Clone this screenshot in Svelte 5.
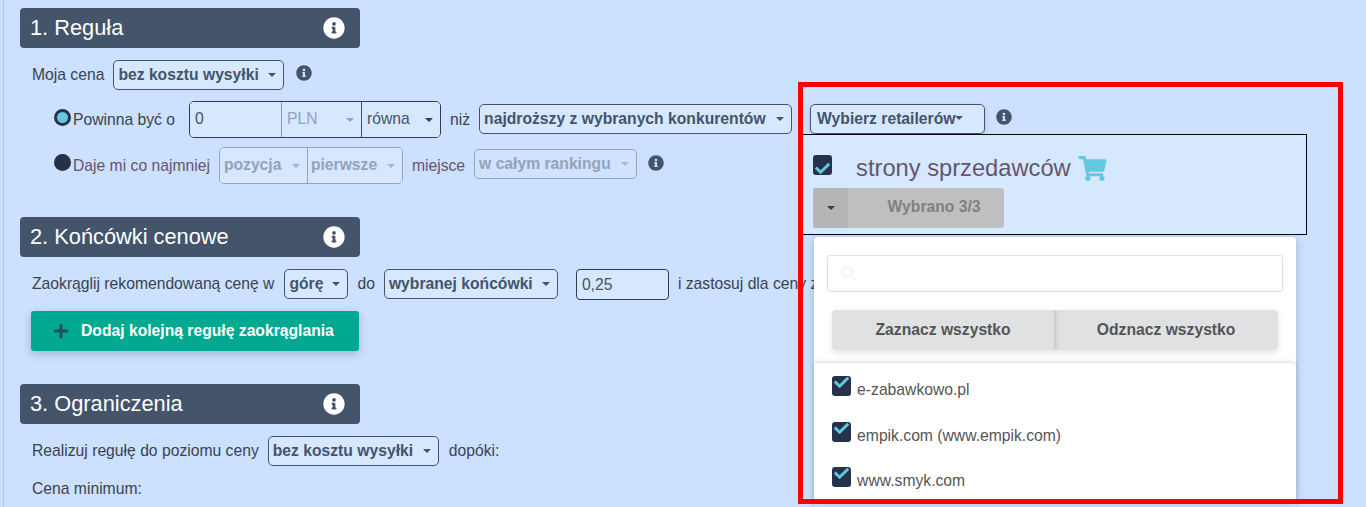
<script lang="ts">
const retailers = ["e-zabawkowo.pl", "empik.com (www.empik.com)", "www.smyk.com"];
const infoPath =
	"M256 8C119.043 8 8 119.083 8 256c0 136.997 111.043 248 248 248s248-111.003 248-248C504 119.083 392.957 8 256 8zm0 110c23.196 0 42 18.804 42 42s-18.804 42-42 42-42-18.804-42-42 18.804-42 42-42zm56 254c0 6.627-5.373 12-12 12h-88c-6.627 0-12-5.373-12-12v-24c0-6.627 5.373-12 12-12h12v-64h-12c-6.627 0-12-5.373-12-12v-24c0-6.627 5.373-12 12-12h64c6.627 0 12 5.373 12 12v100h12c6.627 0 12 5.373 12 12v24z";
const checkPath =
	"M173.898 439.404l-166.4-166.4c-9.997-9.997-9.997-26.206 0-36.204l36.203-36.204c9.997-9.998 26.207-9.998 36.204 0L192 312.69 432.095 72.596c9.997-9.997 26.207-9.997 36.204 0l36.203 36.204c9.997 9.997 9.997 26.206 0 36.204l-294.4 294.401c-9.998 9.997-26.207 9.997-36.204-.001z";
</script>

{#snippet info(cls)}
	<svg class={cls} viewBox="0 0 512 512" aria-hidden="true"><path d={infoPath} /></svg>
{/snippet}

{#snippet checkbox(cls)}
	<span class="check {cls}">
		<svg viewBox="0 0 512 512" aria-hidden="true"><path d={checkPath} /></svg>
	</span>
{/snippet}

<div class="page">
	<section class="rule">
		<h2>1. Reguła {@render info("head-info")}</h2>
		<div class="row first">
			<span class="label">Moja cena</span>
			<div class="select w171">bez kosztu wysyłki<i class="caret"></i></div>
			{@render info("row-info")}
		</div>
		<div class="row option">
			<span class="radio on"></span>
			<span class="label">Powinna być o</span>
			<div class="group active">
				<div class="cell amount">0</div>
				<div class="cell currency">PLN<i class="caret"></i></div>
				<div class="cell relation">równa<i class="caret dark"></i></div>
			</div>
			<span class="label">niż</span>
			<div class="select w313">najdroższy z wybranych konkurentów<i class="caret"></i></div>
			<div class="picker">
				<div class="select retail">Wybierz retailerów<i class="caret tight"></i></div>
				<div class="panel">
					<div class="panel-title">
						{@render checkbox("low")}
						<span class="panel-name">strony sprzedawców</span>
						<svg class="cart" viewBox="0 0 576 512" aria-hidden="true"><path d="M528.12 301.319l47.273-208C578.806 78.301 567.391 64 551.99 64H159.208l-9.166-44.81C147.758 8.021 137.93 0 126.529 0H24C10.745 0 0 10.745 0 24v16c0 13.255 10.745 24 24 24h69.883l70.248 343.435C147.325 417.1 136 435.222 136 456c0 30.928 25.072 56 56 56s56-25.072 56-56c0-15.674-6.447-29.835-16.824-40h209.647C430.447 426.165 424 440.326 424 456c0 30.928 25.072 56 56 56s56-25.072 56-56c0-22.172-12.888-41.332-31.579-50.405l5.517-24.276c3.413-15.018-8.002-29.319-23.403-29.319H218.117l-6.545-32h293.145c11.206 0 20.92-7.754 23.403-18.681z" /></svg>
					</div>
					<div class="chosen">
						<span class="chosen-caret"><i class="caret dark"></i></span>
						<span class="chosen-text">Wybrano 3/3</span>
					</div>
				</div>
				<div class="dropdown">
					<div class="search">
						<svg viewBox="0 0 512 512" aria-hidden="true"><path d="M505 442.7L405.3 343c-4.5-4.5-10.6-7-17-7H372c27.6-35.3 44-79.7 44-128C416 93.1 322.9 0 208 0S0 93.1 0 208s93.1 208 208 208c48.3 0 92.7-16.4 128-44v16.3c0 6.4 2.5 12.5 7 17l99.7 99.7c9.4 9.4 24.6 9.4 33.9 0l28.3-28.3c9.4-9.4 9.4-24.6.1-34zM208 336c-70.7 0-128-57.2-128-128 0-70.7 57.2-128 128-128 70.7 0 128 57.2 128 128 0 70.7-57.2 128-128 128z" /></svg>
					</div>
					<div class="bulk">
						<button type="button" class="select-all">Zaznacz wszystko</button>
						<button type="button">Odznacz wszystko</button>
					</div>
					<ul>
						{#each retailers as retailer}
							<li>{@render checkbox("high")}<span class="retailer">{retailer}</span></li>
						{/each}
					</ul>
				</div>
			</div>
			{@render info("row-info")}
		</div>
		<div class="row option second">
			<span class="radio"></span>
			<span class="label muted">Daje mi co najmniej</span>
			<div class="group disabled">
				<div class="cell position">pozycja<i class="caret"></i></div>
				<div class="cell place">pierwsze<i class="caret"></i></div>
			</div>
			<span class="label muted">miejsce</span>
			<div class="select disabled w163">w całym rankingu<i class="caret"></i></div>
			{@render info("row-info")}
		</div>
	</section>

	<section class="rule rounding">
		<h2>2. Końcówki cenowe {@render info("head-info")}</h2>
		<div class="row first">
			<span class="label">Zaokrąglij rekomendowaną cenę w</span>
			<div class="select w64">górę<i class="caret"></i></div>
			<span class="label">do</span>
			<div class="select w174">wybranej końcówki<i class="caret"></i></div>
			<div class="ending">0,25</div>
			<span class="label nowrap">i zastosuj dla ceny z przedziału</span>
		</div>
		<button type="button" class="add">
			<svg viewBox="0 0 448 512" aria-hidden="true"><path d="M416 208H272V64c0-17.67-14.33-32-32-32h-32c-17.67 0-32 14.33-32 32v144H32c-17.67 0-32 14.33-32 32v32c0 17.67 14.33 32 32 32h144v144c0 17.67 14.33 32 32 32h32c17.67 0 32-14.33 32-32V304h144c17.67 0 32-14.33 32-32v-32c0-17.67-14.33-32-32-32z" /></svg>
			Dodaj kolejną regułę zaokrąglania
		</button>
	</section>

	<section class="rule limits">
		<h2>3. Ograniczenia {@render info("head-info")}</h2>
		<div class="row first">
			<span class="label">Realizuj regułę do poziomu ceny</span>
			<div class="select w171">bez kosztu wysyłki<i class="caret"></i></div>
			<span class="label until">dopóki:</span>
		</div>
		<div class="row minimum"><span class="label">Cena minimum:</span></div>
	</section>

	<div class="frame"></div>
</div>

<style>
	:global(body) {
		margin: 0;
		background: #cce0ff;
	}

	.page {
		position: relative;
		box-sizing: border-box;
		height: 507px;
		padding: 8px 0 0 20px;
		overflow: hidden;
		background: #cce0ff;
		color: #3c4858;
		font-family: "Liberation Sans", Arial, sans-serif;
		font-size: 15.7px;
	}

	.page::before {
		content: "";
		position: absolute;
		top: 0;
		bottom: 0;
		left: 3px;
		width: 1px;
		background: #b5c3dc;
	}

	h2 {
		display: flex;
		align-items: center;
		justify-content: space-between;
		box-sizing: border-box;
		width: 340px;
		height: 40px;
		margin: 0;
		padding: 0 15px 0 10px;
		border-radius: 4px;
		background: #44546a;
		color: #fff;
		font-size: 21.8px;
		font-weight: 400;
	}

	.head-info {
		width: 22px;
		height: 22px;
		fill: #fff;
	}

	.row-info {
		flex: none;
		width: 16px;
		height: 16px;
		margin-top: -5px;
		margin-left: 3px;
		fill: #44546a;
	}

	.row {
		display: flex;
		align-items: center;
		gap: 8px;
		margin-left: 12px;
	}

	.first {
		gap: 9px;
		height: 30px;
		margin-top: 12px;
	}

	.until {
		margin-left: 1px;
	}

	.option {
		height: 35px;
		margin-top: 12px;
		margin-left: 34px;
	}

	.option .select {
		margin-bottom: 1px;
	}

	.second {
		margin-top: 11px;
	}

	.second .select {
		margin-bottom: 3px;
		margin-left: 1px;
	}

	.label {
		color: #3a4350;
	}

	.muted {
		color: #65566e;
	}

	.nowrap {
		white-space: nowrap;
	}

	.radio {
		flex: none;
		box-sizing: border-box;
		width: 17px;
		height: 17px;
		margin-top: -4px;
		margin-right: -6px;
		border: 3px solid #25324a;
		border-radius: 50%;
		background: #25324a;
	}

	.second .radio {
		margin-top: -6px;
	}

	.radio.on {
		background: #62c9de;
	}

	.select {
		position: relative;
		flex: none;
		box-sizing: border-box;
		height: 30px;
		padding: 0 4px;
		border: 1px solid #44546a;
		border-radius: 5px;
		background: #d6e8ff;
		color: #44546a;
		font-weight: 700;
		line-height: 28px;
		white-space: nowrap;
	}

	.w171 {
		width: 171px;
	}

	.w313 {
		width: 313px;
		margin-left: 1px;
	}

	.w163 {
		width: 163px;
	}

	.w64 {
		width: 64px;
		margin-left: 1px;
	}

	.w174 {
		width: 174px;
	}

	.ending {
		flex: none;
		box-sizing: border-box;
		width: 93px;
		height: 31px;
		margin-left: 9px;
		padding: 0 5px;
		border: 1px solid #2f3d52;
		border-radius: 4px;
		background: #d6e8ff;
		color: #44546a;
		line-height: 29px;
	}

	.caret {
		position: absolute;
		top: 50%;
		right: 7px;
		width: 0;
		height: 0;
		margin-top: -2px;
		border-top: 4px solid #44546a;
		border-right: 4px solid transparent;
		border-left: 4px solid transparent;
	}

	.caret.dark {
		border-top-color: #2f3d52;
	}

	.caret.tight {
		position: static;
		display: inline-block;
		margin: 0 0 3px 0;
		vertical-align: middle;
	}

	.group {
		display: flex;
		flex: none;
		height: 35px;
		border: 1px solid #2f3d52;
		border-radius: 5px;
		overflow: hidden;
	}

	.group.active {
		margin-right: 1px;
		margin-left: 6px;
	}

	.cell {
		position: relative;
		box-sizing: border-box;
		padding: 0 5px;
		background: #d6e8ff;
		line-height: 33px;
		white-space: nowrap;
	}

	.amount {
		width: 91px;
		color: #44546a;
	}

	.currency {
		width: 80px;
		border-left: 1px solid #8a9ab0;
		color: #94a3b8;
	}

	.currency .caret {
		border-top-color: #94a3b8;
	}

	.relation {
		width: 79px;
		border-left: 1px solid #44546a;
		color: #44546a;
	}

	.group.disabled {
		margin-right: 1px;
		margin-left: 1px;
		border-color: #94a3b8;
	}

	.position,
	.place {
		color: #94a3b8;
		font-weight: 700;
	}

	.position {
		width: 87px;
		padding-left: 4px;
	}

	.place {
		width: 95px;
		padding-left: 3px;
		border-left: 1px solid #94a3b8;
	}

	.group.disabled .caret,
	.select.disabled .caret {
		border-top-color: #a9b6c8;
	}

	.select.disabled {
		border-color: #94a3b8;
		background: #cfe2ff;
		color: #94a3b8;
	}

	.picker {
		position: relative;
		flex: none;
		margin-left: 10px;
		margin-bottom: 1px;
	}

	.option .picker .select {
		margin-bottom: 0;
	}

	.retail {
		width: 175px;
		padding-left: 6px;
		box-shadow: 0 2px 5px rgba(60, 72, 88, 0.2);
	}

	.panel {
		position: absolute;
		z-index: 2;
		top: 30px;
		left: -9px;
		box-sizing: border-box;
		width: 506px;
		height: 101px;
		padding: 19px 0 0 11px;
		border: 1px solid #000;
		background: #d6e8ff;
	}

	.panel-title {
		display: flex;
		align-items: center;
		height: 28px;
	}

	.panel-name {
		margin-left: 24px;
		color: #65566e;
		font-size: 23.7px;
	}

	.cart {
		width: 29px;
		height: 25px;
		margin-left: 7px;
		fill: #62c9de;
	}

	.check {
		display: flex;
		flex: none;
		justify-content: center;
		box-sizing: border-box;
		width: 19px;
		height: 20px;
		border-radius: 3px;
		background: #25324a;
	}

	.check svg {
		width: 15px;
		height: 15px;
		fill: #62c9de;
	}

	.check.low {
		align-items: flex-end;
		margin-top: -6px;
	}

	.check.low svg {
		margin-bottom: -1px;
	}

	.check.high {
		align-items: flex-start;
	}

	.check.high svg {
		margin-top: -1px;
	}

	.chosen {
		display: flex;
		width: 191px;
		height: 40px;
		margin-top: 6px;
		border-radius: 3px;
		background: #bfbfbf;
		overflow: hidden;
	}

	.chosen-caret {
		position: relative;
		width: 35px;
		background: #b5b5b5;
	}

	.chosen-caret .caret {
		right: 13px;
	}

	.chosen-text {
		flex: 1;
		padding-left: 16px;
		color: #808080;
		font-size: 15.7px;
		font-weight: 700;
		line-height: 38px;
		text-align: center;
	}

	.dropdown {
		position: absolute;
		z-index: 1;
		top: 133px;
		left: 4px;
		box-sizing: border-box;
		width: 482px;
		height: 263px;
		border-radius: 4px 4px 0 0;
		background: #fff;
		box-shadow: 0 2px 8px rgba(60, 72, 88, 0.3);
	}

	.search {
		display: flex;
		align-items: center;
		box-sizing: border-box;
		height: 37px;
		margin: 18px 13px 0;
		padding-left: 13px;
		border: 1px solid #dcdee2;
		border-radius: 3px;
	}

	.search svg {
		width: 15px;
		height: 15px;
		fill: #f4f6f6;
	}

	.bulk {
		display: flex;
		height: 40px;
		margin: 18px 18px 0;
		border-radius: 4px;
		box-shadow: 0 3px 6px rgba(60, 72, 88, 0.15);
		overflow: hidden;
	}

	.bulk button {
		flex: 1;
		padding: 0;
		border: 0;
		background: #e0e1e3;
		color: #555;
		font: 700 15.7px "Liberation Sans", Arial, sans-serif;
	}

	.bulk .select-all {
		position: relative;
		flex: none;
		width: 222px;
		box-shadow: 2px 0 4px rgba(60, 72, 88, 0.18);
	}

	ul {
		height: 145px;
		margin: 12px 0 0;
		padding: 0 0 0 18px;
		border-top: 1px solid #e3e5e8;
		border-radius: 4px 4px 0 0;
		list-style: none;
		box-shadow: 0 0 4px rgba(60, 72, 88, 0.2);
	}

	li {
		display: flex;
		height: 45.5px;
		padding-top: 13px;
		box-sizing: border-box;
		color: #555;
	}

	.retailer {
		margin: 5px 0 0 6px;
	}

	.rounding {
		margin-top: 34px;
	}

	.add {
		display: flex;
		align-items: center;
		gap: 13px;
		width: 328px;
		height: 40px;
		margin: 12px 0 0 11px;
		padding: 0 0 0 23px;
		border: 0;
		border-radius: 3px;
		background: #00a98f;
		box-shadow: 0 3px 8px rgba(60, 72, 88, 0.3);
		color: #fff;
		font: 700 15.7px "Liberation Sans", Arial, sans-serif;
		white-space: nowrap;
	}

	.add svg {
		width: 14px;
		height: 16px;
		fill: #22505a;
	}

	.limits {
		margin-top: 33px;
	}

	.minimum {
		height: 30px;
		margin-top: 8px;
	}

	.frame {
		position: absolute;
		z-index: 3;
		top: 82px;
		left: 798px;
		box-sizing: border-box;
		width: 545px;
		height: 422px;
		border: 5px solid #f00;
		pointer-events: none;
	}
</style>
